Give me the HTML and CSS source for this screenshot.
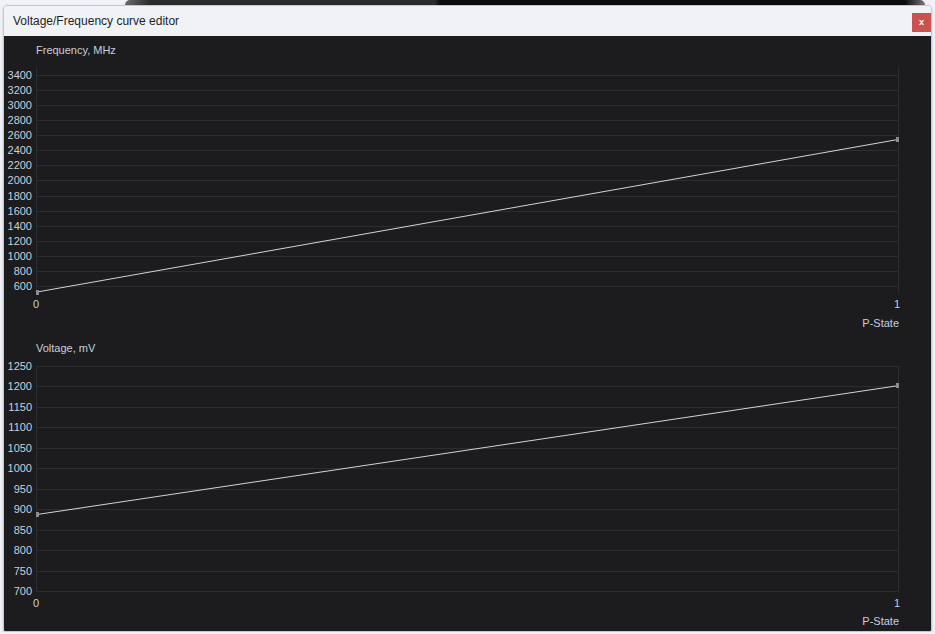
FILE: index.html
```html
<!DOCTYPE html>
<html lang="en">
  <head>
    <title>Voltage/Frequency curve editor</title>
    <meta charset="UTF-8" />
    <meta name="viewport" content="width=device-width, initial-scale=1.0" />
    <link rel="stylesheet" href="styles.css">
  </head>
  <body>
    <div class="window-strip"></div>

    <div class="dialog">
      <div class="dialog-header">
        <span class="dialog-title">Voltage/Frequency curve editor</span>
        <button class="close-btn" type="button">x</button>
      </div>

      <div class="dialog-body">
        <!-- Frequency per P-State -->
        <svg class="chart" width="926" height="299" viewBox="0 0 926 299">
          <text class="axis-title" x="32" y="18">Frequency, MHz</text>
          <g class="grid">
            <line x1="32" x2="894" y1="39.5" y2="39.5" />
            <line x1="32" x2="894" y1="54.5" y2="54.5" />
            <line x1="32" x2="894" y1="69.5" y2="69.5" />
            <line x1="32" x2="894" y1="84.5" y2="84.5" />
            <line x1="32" x2="894" y1="99.5" y2="99.5" />
            <line x1="32" x2="894" y1="114.5" y2="114.5" />
            <line x1="32" x2="894" y1="129.5" y2="129.5" />
            <line x1="32" x2="894" y1="144.5" y2="144.5" />
            <line x1="32" x2="894" y1="160.5" y2="160.5" />
            <line x1="32" x2="894" y1="175.5" y2="175.5" />
            <line x1="32" x2="894" y1="190.5" y2="190.5" />
            <line x1="32" x2="894" y1="205.5" y2="205.5" />
            <line x1="32" x2="894" y1="220.5" y2="220.5" />
            <line x1="32" x2="894" y1="235.5" y2="235.5" />
            <line x1="32" x2="894" y1="250.5" y2="250.5" />
            <line x1="32.5" x2="32.5" y1="31" y2="257" />
            <line x1="894.5" x2="894.5" y1="31" y2="257" />
          </g>
          <g class="y-labels">
            <text x="28" y="43">3400</text>
            <text x="28" y="58">3200</text>
            <text x="28" y="73">3000</text>
            <text x="28" y="88">2800</text>
            <text x="28" y="103">2600</text>
            <text x="28" y="118">2400</text>
            <text x="28" y="133">2200</text>
            <text x="28" y="148">2000</text>
            <text x="28" y="164">1800</text>
            <text x="28" y="179">1600</text>
            <text x="28" y="194">1400</text>
            <text x="28" y="209">1200</text>
            <text x="28" y="224">1000</text>
            <text x="28" y="239">800</text>
            <text x="28" y="254">600</text>
          </g>
          <line class="curve" x1="33" y1="256" x2="894" y2="103.5" />
          <rect class="point" x="32" y="254" width="3" height="5" />
          <rect class="point" x="892" y="101" width="3" height="5" />
          <g class="x-labels">
            <text x="32" y="272">0</text>
            <text x="893" y="272">1</text>
          </g>
          <text class="x-title" x="895" y="291">P-State</text>
        </svg>

        <!-- Voltage per P-State -->
        <svg class="chart" width="926" height="296" viewBox="0 0 926 296">
          <text class="axis-title" x="32" y="17">Voltage, mV</text>
          <g class="grid">
            <line x1="32" x2="894" y1="31.5" y2="31.5" />
            <line x1="32" x2="894" y1="51.5" y2="51.5" />
            <line x1="32" x2="894" y1="72.5" y2="72.5" />
            <line x1="32" x2="894" y1="92.5" y2="92.5" />
            <line x1="32" x2="894" y1="113.5" y2="113.5" />
            <line x1="32" x2="894" y1="133.5" y2="133.5" />
            <line x1="32" x2="894" y1="154.5" y2="154.5" />
            <line x1="32" x2="894" y1="174.5" y2="174.5" />
            <line x1="32" x2="894" y1="195.5" y2="195.5" />
            <line x1="32" x2="894" y1="215.5" y2="215.5" />
            <line x1="32" x2="894" y1="236.5" y2="236.5" />
            <line x1="32" x2="894" y1="256.5" y2="256.5" />
            <line x1="32.5" x2="32.5" y1="31" y2="257" />
            <line x1="894.5" x2="894.5" y1="31" y2="257" />
          </g>
          <g class="y-labels">
            <text x="28" y="35">1250</text>
            <text x="28" y="55">1200</text>
            <text x="28" y="76">1150</text>
            <text x="28" y="96">1100</text>
            <text x="28" y="117">1050</text>
            <text x="28" y="137">1000</text>
            <text x="28" y="158">950</text>
            <text x="28" y="178">900</text>
            <text x="28" y="199">850</text>
            <text x="28" y="219">800</text>
            <text x="28" y="240">750</text>
            <text x="28" y="260">700</text>
          </g>
          <line class="curve" x1="33" y1="179.5" x2="894" y2="50.7" />
          <rect class="point" x="32" y="177" width="3" height="5" />
          <rect class="point" x="892" y="48" width="3" height="5" />
          <g class="x-labels">
            <text x="32" y="272">0</text>
            <text x="893" y="272">1</text>
          </g>
          <text class="x-title" x="895" y="290">P-State</text>
        </svg>
      </div>
    </div>
  </body>
</html>
```

FILE: styles.css
```css
body {
  margin: 0;
  background-color: #f1f2f7;
  font-family: "Liberation Sans", Arial, sans-serif;
  overflow: hidden;
}
.window-strip {
  width: 800px;
  height: 5px;
  margin-left: 125px;
  background: linear-gradient(to right, #6b6b6b 0, #2c2c2c 25px, #2c2c2c 310px, #0d0d0d 315px, #0d0d0d 780px, #777 800px);
  border-radius: 8px 8px 0 0;
}
.dialog {
  width: 927px;
  height: 625px;
  margin-left: 3px;
  border: 1px solid #c4c7ce;
  border-radius: 4px 4px 2px 2px;
  display: flex;
  flex-direction: column;
  overflow: hidden;
  box-shadow: 0 1px 3px rgba(0, 0, 0, 0.15);
}
.dialog-header {
  height: 30px;
  background-color: #f0f2f6;
  display: flex;
  align-items: flex-start;
  justify-content: space-between;
}
.dialog-title {
  margin: 8px 0 0 9px;
  font-size: 12px;
  color: #1e1e1e;
}
.close-btn {
  width: 19px;
  height: 19px;
  margin-top: 7px;
  padding: 0;
  border: none;
  background-color: #c9524f;
  color: #fff;
  font-family: "Liberation Sans", Arial, sans-serif;
  font-size: 9px;
  font-weight: bold;
  line-height: 17px;
  cursor: pointer;
}
.dialog-body {
  flex: 1;
  background-color: #1c1c1e;
  display: flex;
  flex-direction: column;
}
.chart {
  display: block;
  font-family: "Liberation Sans", Arial, sans-serif;
  font-size: 11px;
}
.chart text {
  fill: #c8cfdb;
}
.grid line {
  stroke: #2d2d30;
  stroke-width: 1;
}
.y-labels text {
  text-anchor: end;
}
.x-labels text {
  text-anchor: middle;
}
.x-title {
  text-anchor: end;
}
.curve {
  stroke: #d4d4d4;
  stroke-width: 1;
}
.point {
  fill: #8c8c8c;
}
```
